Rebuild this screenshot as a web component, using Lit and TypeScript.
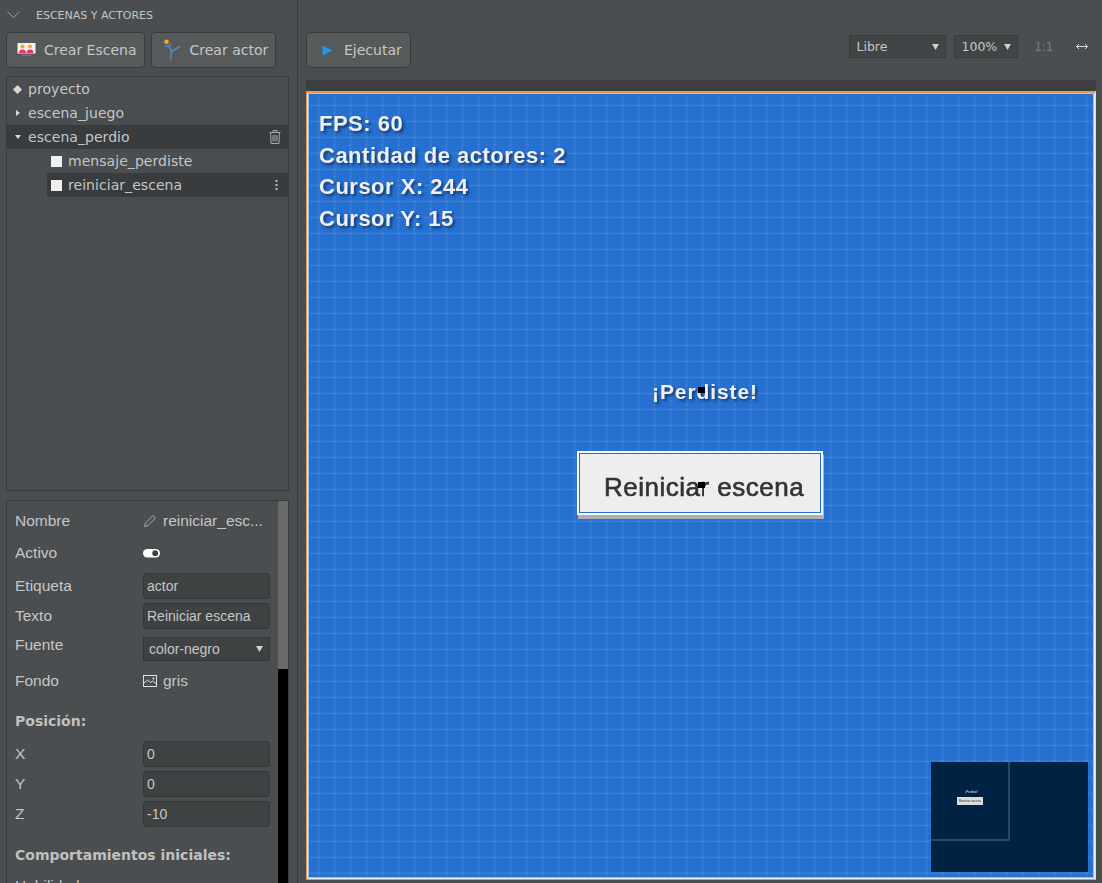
import { LitElement, html, css, svg } from "lit";
import { customElement } from "lit/decorators.js";

@customElement("app-root")
export class AppRoot extends LitElement {
  static styles = css`
    :host {
      display: block;
      width: 1102px;
      height: 883px;
      overflow: hidden;
      background: #4a4e50;
      color: #c8c8c8;
      font-family: "DejaVu Sans", sans-serif;
      font-size: 14px;
    }
    .layout {
      display: flex;
      height: 883px;
    }
    .sidebar {
      flex: none;
      border-right: 1px solid #3a3d3e;
      padding: 0 8px 0 6px;
      width: 283px;
      display: flex;
      flex-direction: column;
      overflow: hidden;
    }
    .panel-title {
      height: 30px;
      padding-bottom: 2px;
      flex: none;
      display: flex;
      align-items: center;
      gap: 16px;
      font-size: 11px;
      color: #c4c4c4;
    }
    .panel-title svg {
      margin-left: 1px;
      margin-top: -1px;
    }
    .tools {
      display: flex;
      flex: none;
      gap: 6px;
      height: 36px;
    }
    .btn {
      display: flex;
      align-items: center;
      box-sizing: border-box;
      height: 36px;
      gap: 8px;
      padding: 0 7px 0 10px;
      background: #565a5b;
      border: 1px solid #393c3d;
      border-radius: 4px;
      color: #c6c6c6;
      font-size: 14px;
      white-space: nowrap;
    }
    .tree {
      margin-top: 8px;
      height: 415px;
      flex: none;
      width: 283px;
      box-sizing: border-box;
      border: 1px solid #393c3d;
    }
    .row {
      height: 24px;
      display: flex;
      align-items: center;
      color: #c6c6c6;
      letter-spacing: 0.05px;
    }
    .row .mark {
      width: 21px;
      display: flex;
      justify-content: center;
      flex: none;
    }
    .row.selected {
      background: #393c3e;
    }
    .row.child {
      margin-left: 40px;
      gap: 6px;
      padding-left: 4px;
    }
    .swatch {
      width: 11px;
      height: 11px;
      background: #f0f0f0;
      flex: none;
    }
    .row .end {
      margin-left: auto;
      margin-right: 7px;
      display: flex;
    }
    .row .end.kebab {
      margin-right: 10px;
    }
    .props {
      margin-top: 9px;
      width: 283px;
      flex: 1;
      min-height: 0;
      box-sizing: border-box;
      border: 1px solid #393c3d;
      border-bottom: none;
      display: flex;
      overflow: hidden;
    }
    .props-body {
      flex: 1;
      padding: 0 8px;
      font-family: "Liberation Sans", sans-serif;
      font-size: 15.5px;
      color: #c6c6c6;
    }
    .scrollbar {
      width: 10px;
      flex: none;
      background: #000;
    }
    .scrollbar div {
      height: 168px;
      background: #6a6a6a;
    }
    .prop {
      display: grid;
      grid-template-columns: 128px 127px;
      align-items: center;
    }
    .prop .value {
      display: flex;
      align-items: center;
      gap: 6px;
      white-space: nowrap;
    }
    .h40 { height: 40px; }
    .h24 { height: 24px; }
    .h30 { height: 30px; }
    .h36 { height: 36px; }
    .h28 { height: 28px; }
    .first-field { margin-top: 6px; }
    .first-pos { margin-top: 10px; }
    .raised { margin-top: -9px; }
    .field {
      box-sizing: border-box;
      height: 26px;
      width: 127px;
      padding: 0 3px;
      display: flex;
      align-items: center;
      background: #3f4243;
      border: 1px solid #343738;
      border-radius: 4px;
      font-size: 14px;
    }
    .select {
      box-sizing: border-box;
      height: 24px;
      width: 127px;
      padding: 0 6px 0 5px;
      display: flex;
      align-items: center;
      justify-content: space-between;
      background: #3f4243;
      border: 1px solid #343738;
      font-size: 14px;
    }
    h4 {
      margin: 0;
      font-family: "DejaVu Sans", sans-serif;
      font-size: 14px;
      font-weight: bold;
      color: #c0c0c0;
      white-space: nowrap;
    }
    .pos-title { margin-top: 18px; }
    .behav-title { margin-top: 18px; }
    .clipped { margin-top: 14px; }
    .main {
      flex: 1;
      padding: 32px 6px 0 8px;
      display: flex;
      flex-direction: column;
      min-width: 0;
    }
    .toolbar {
      display: flex;
      flex: none;
      align-items: center;
      height: 36px;
    }
    .toolbar .btn {
      gap: 11px;
      padding: 0 8px 0 15px;
    }
    .toolbar .right {
      margin-left: auto;
      display: flex;
      align-items: center;
      margin-top: -7px;
      font-size: 12.5px;
      margin-right: 8px;
    }
    .drop {
      box-sizing: border-box;
      height: 23px;
      display: flex;
      align-items: center;
      justify-content: space-between;
      padding: 0 6px;
      background: #414546;
      border: 1px solid #393c3d;
      color: #c6c6c6;
    }
    .drop.wide { width: 97px; }
    .drop.zoom { width: 64px; margin-left: 8px; }
    .ratio {
      color: #7c7f80;
      margin-left: 16px;
      font-size: 11.5px;
    }
    .arrows {
      margin-left: 23px;
      display: flex;
    }
    .strip {
      height: 11px;
      margin-top: 12px;
      flex: none;
      background: #3c3e3f;
    }
    .stage {
      position: relative;
      box-sizing: border-box;
      width: 790px;
      height: 789px;
      border: 1px solid #e39a58;
      border-right-color: #f0d8c0;
      background-color: #2670d2;
      overflow: hidden;
    }
    /* grid is a blurred dotted pattern, one layer per direction */
    .grid-v,
    .grid-h {
      position: absolute;
      inset: 0;
    }
    .grid-v {
      background: repeating-linear-gradient(90deg, transparent 0 10px, rgba(255, 255, 255, 0.05) 10px 11px, rgba(255, 255, 255, 0.1) 11px 12px, rgba(255, 255, 255, 0.05) 12px 13px, transparent 13px 16px);
      -webkit-mask-image: repeating-linear-gradient(180deg, #000 0 2px, rgba(0, 0, 0, 0.45) 2px 4px);
      mask-image: repeating-linear-gradient(180deg, #000 0 2px, rgba(0, 0, 0, 0.45) 2px 4px);
    }
    .grid-h {
      background: repeating-linear-gradient(180deg, transparent 0 12px, rgba(255, 255, 255, 0.05) 12px 13px, rgba(255, 255, 255, 0.1) 13px 14px, rgba(255, 255, 255, 0.05) 14px 15px, transparent 15px 16px);
      -webkit-mask-image: repeating-linear-gradient(90deg, #000 0 2px, rgba(0, 0, 0, 0.45) 2px 4px);
      mask-image: repeating-linear-gradient(90deg, #000 0 2px, rgba(0, 0, 0, 0.45) 2px 4px);
    }
    .edge {
      position: absolute;
      inset: 0;
      box-shadow: inset 0 1px 0 #e39a58, inset 0 2px 0 #a9c8f0, inset 0 0 0 1px #e6eef9, inset 0 0 0 2px #9cbfee;
    }
    .hud {
      position: absolute;
      left: 12px;
      top: 16px;
      font-family: "Liberation Sans", sans-serif;
      font-size: 22px;
      font-weight: bold;
      line-height: 31.5px;
      letter-spacing: 0.5px;
      color: #f0f0f0;
      white-space: nowrap;
      text-shadow: 2px 2px 3px #123a6c;
      filter: blur(0.4px);
    }
    .lost {
      position: absolute;
      left: 345px;
      top: 288px;
      font-family: "Liberation Sans", sans-serif;
      font-size: 21px;
      font-weight: bold;
      letter-spacing: 0.9px;
      color: #f0f0f0;
      white-space: nowrap;
      text-shadow: 2px 2px 3px #123a6c;
      filter: blur(0.4px);
    }
    .handle {
      position: absolute;
      width: 7px;
      height: 6px;
      background: #000;
    }
    .handle.top { left: 391px; top: 295px; }
    .handle.bottom { left: 391px; top: 390px; }
    .patch {
      position: absolute;
      left: 397px;
      top: 394px;
      width: 12px;
      height: 12px;
      background: #eeeeee;
    }
    .restart {
      position: absolute;
      left: 270px;
      top: 359px;
      box-sizing: border-box;
      width: 246px;
      height: 64px;
      padding: 8px 0 0 25px;
      display: flex;
      align-items: center;
      background: #eeeeee;
      border: 2px solid #f6f9fd;
      box-shadow: inset 0 0 0 1px #266ed0, 1px 4px 0 #b0b0b0;
      color: #333;
      white-space: nowrap;
    }
    .restart span {
      font-family: "Liberation Sans", sans-serif;
      font-size: 26px;
      letter-spacing: 0.5px;
      -webkit-text-stroke: 0.6px #333;
      filter: blur(0.5px);
    }
    .minimap {
      position: absolute;
      left: 624px;
      top: 670px;
      width: 157px;
      height: 110px;
      background: #002243;
      filter: blur(0.4px);
      font-family: "Liberation Sans", sans-serif;
      font-size: 3px;
      white-space: nowrap;
    }
    .minimap .view {
      position: absolute;
      left: 0;
      top: 0;
      width: 79px;
      height: 79px;
      box-sizing: border-box;
      border-right: 2px solid #2a4763;
      border-bottom: 2px solid #2a4763;
    }
    .minimap .mini-btn {
      position: absolute;
      left: 26px;
      top: 35px;
      width: 26px;
      height: 8px;
      display: flex;
      align-items: center;
      justify-content: center;
      background: #dcdcdc;
      color: #333;
    }
    .minimap .mini-txt {
      position: absolute;
      left: 34px;
      top: 28px;
      color: #dfe6ee;
    }
  `;

  private sceneIcon() {
    return svg`<svg width="19" height="16" viewBox="0 0 19 16">
      <rect x="0.500" y="1" width="18" height="10.500" fill="#f4f2ee"/>
      <circle cx="5.500" cy="4.500" r="2" fill="#f9a825"/>
      <circle cx="13" cy="4.500" r="2" fill="#f9a825"/>
      <path d="M2 11c0-2.500 1.500-3.600 3.500-3.600s3.500 1.100 3.500 3.600zM9.500 11c0-2.500 1.500-3.600 3.500-3.600s3.500 1.100 3.500 3.600z" fill="#e8316f"/>
      <rect x="5" y="13" width="9" height="1" fill="#5c7f9c"/>
    </svg>`;
  }

  private actorIcon() {
    return svg`<svg width="20" height="22" viewBox="0 0 20 22">
      <circle cx="4.500" cy="2.800" r="2.300" fill="#f9a825"/>
      <path d="M2.500 7.500l4.500-.5 2.500 5.500 8.500-5M9.500 12.500l-1 8M7 7l2-2" fill="none" stroke="#5b7f9e" stroke-width="2.200"/>
    </svg>`;
  }

  private trashIcon() {
    return svg`<svg width="12" height="14" viewBox="0 0 12 14" fill="none" stroke="#a8a8a8" stroke-width="1">
      <path d="M0.500 2.500h11M4 2.500v-2h4v2M1.500 2.500l.5 11h8l.5-11M4 5v6.500M6 5v6.500M8 5v6.500"/>
    </svg>`;
  }

  private caret() {
    return svg`<svg width="7" height="6" viewBox="0 0 7 6"><path d="M0 0h7l-3.500 6z" fill="#d0d0d0"/></svg>`;
  }

  render() {
    return html`
      <div class="layout">
        <aside class="sidebar">
          <div class="panel-title">
            <svg width="13" height="7" viewBox="0 0 13 7" fill="none" stroke="#9a9c9d"><path d="M0.500 0.500l6 6 6-6"/></svg>
            <span>ESCENAS Y ACTORES</span>
          </div>
          <div class="tools">
            <div class="btn">${this.sceneIcon()}<span>Crear Escena</span></div>
            <div class="btn">${this.actorIcon()}<span>Crear actor</span></div>
          </div>

          <div class="tree">
            <div class="row">
              <span class="mark"><svg width="9" height="9" viewBox="0 0 9 9"><path d="M4.500 0l4.500 4.500-4.500 4.500-4.500-4.500z" fill="#d8d8d8"/></svg></span>
              proyecto
            </div>
            <div class="row">
              <span class="mark"><svg width="4" height="6" viewBox="0 0 4 6"><path d="M0 0l4 3-4 3z" fill="#d8d8d8"/></svg></span>
              escena_juego
            </div>
            <div class="row selected">
              <span class="mark"><svg width="6" height="4" viewBox="0 0 6 4"><path d="M0 0h6l-3 4z" fill="#d8d8d8"/></svg></span>
              escena_perdio
              <span class="end">${this.trashIcon()}</span>
            </div>
            <div class="row child"><span class="swatch"></span>mensaje_perdiste</div>
            <div class="row child selected">
              <span class="swatch"></span>reiniciar_escena
              <span class="end kebab">
                <svg width="3" height="11" viewBox="0 0 3 11" fill="#bdbdbd">
                  <rect x="0.500" y="0" width="2" height="2"/><rect x="0.500" y="4" width="2" height="2"/><rect x="0.500" y="8" width="2" height="2"/>
                </svg>
              </span>
            </div>
          </div>

          <div class="props">
            <div class="props-body">
              <div class="prop h40">
                <span>Nombre</span>
                <span class="value">
                  <svg width="14" height="14" viewBox="0 0 14 14" fill="none" stroke="#a8a8a8"><path d="M1.500 12.500l1-3.500 7.500-7.500 2.500 2.500-7.500 7.500z"/></svg>
                  reiniciar_esc...
                </span>
              </div>
              <div class="prop h24">
                <span>Activo</span>
                <span class="value">
                  <svg width="17" height="9" viewBox="0 0 17 9"><rect width="17" height="8.500" rx="4.200" fill="#fff"/><circle cx="12.200" cy="4.200" r="2.900" fill="#3f4243"/></svg>
                </span>
              </div>
              <div class="prop h30 first-field"><span>Etiqueta</span><span class="field">actor</span></div>
              <div class="prop h30"><span>Texto</span><span class="field">Reiniciar escena</span></div>
              <div class="prop h36">
                <span class="raised">Fuente</span>
                <span class="select">color-negro ${this.caret()}</span>
              </div>
              <div class="prop h28">
                <span>Fondo</span>
                <span class="value">
                  <svg width="14" height="12" viewBox="0 0 14 12" fill="none" stroke="#e0e0e0"><rect x="0.500" y="0.500" width="13" height="11"/><path d="M1 8l3.500-3 3 2.500 2-1.500 3.500 2.500"/><circle cx="10.500" cy="3.500" r="0.700"/></svg>
                  gris
                </span>
              </div>
              <h4 class="pos-title">Posición:</h4>
              <div class="prop h30 first-pos"><span>X</span><span class="field">0</span></div>
              <div class="prop h30"><span>Y</span><span class="field">0</span></div>
              <div class="prop h30"><span>Z</span><span class="field">-10</span></div>
              <h4 class="behav-title">Comportamientos iniciales:</h4>
              <div class="clipped">Habilidades</div>
            </div>
            <div class="scrollbar"><div></div></div>
          </div>
        </aside>

        <main class="main">
          <div class="toolbar">
            <div class="btn">
              <svg width="11" height="11" viewBox="0 0 11 11"><path d="M0.500 0.500l10 5-10 5z" fill="#2196f3"/></svg>
              <span>Ejecutar</span>
            </div>
            <div class="right">
              <div class="drop wide"><span>Libre</span>${this.caret()}</div>
              <div class="drop zoom"><span>100%</span>${this.caret()}</div>
              <span class="ratio">1:1</span>
              <span class="arrows">
                <svg width="12" height="7" viewBox="0 0 12 7" fill="none" stroke="#d8d8d8"><path d="M0.500 3.500h11M3 1l-2.500 2.500 2.500 2.500M9 1l2.500 2.500-2.500 2.500"/></svg>
              </span>
            </div>
          </div>
          <div class="strip"></div>
          <div class="stage">
            <div class="grid-v"></div>
            <div class="grid-h"></div>
            <div class="edge"></div>
            <div class="hud">
              <div>FPS: 60</div>
              <div>Cantidad de actores: 2</div>
              <div>Cursor X: 244</div>
              <div>Cursor Y: 15</div>
            </div>
            <div class="lost">¡Perdiste!</div>
            <div class="restart"><span>Reiniciar escena</span></div>
            <div class="patch"></div>
            <div class="handle top"></div>
            <div class="handle bottom"></div>
            <div class="minimap">
              <div class="view"></div>
              <div class="mini-txt">¡Perdiste!</div>
              <div class="mini-btn">Reiniciar escena</div>
            </div>
          </div>
        </main>
      </div>
    `;
  }
}
